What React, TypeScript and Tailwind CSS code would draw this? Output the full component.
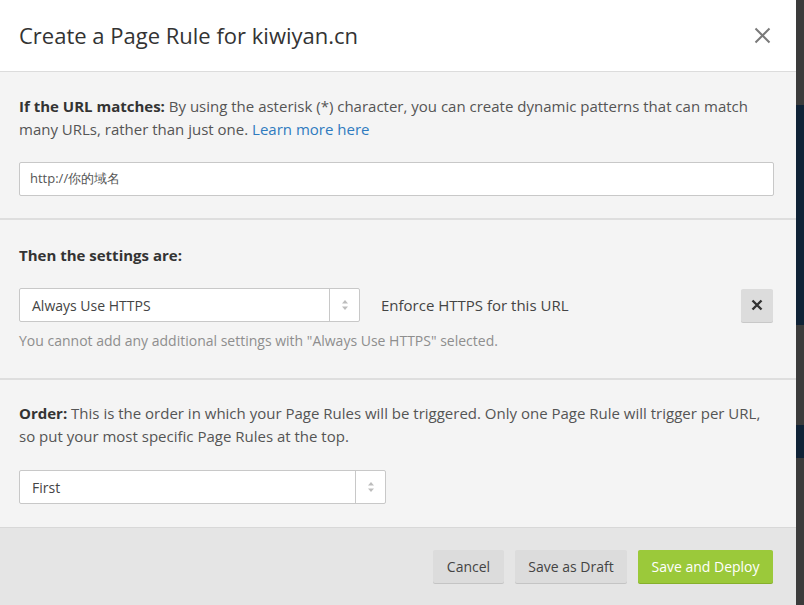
export default function App() {
  return (
    <div className="flex h-[605px] w-[804px] overflow-hidden bg-[#3b3b3b] font-['Open_Sans',sans-serif]">
      {/* Modal */}
      <div className="flex w-[796px] flex-col bg-white">
        {/* Header */}
        <div className="flex h-[72px] shrink-0 items-center justify-between border-b border-[#dcdcdc] pl-[19px] pr-[25px]">
          <h1 className="text-[22px] text-[#333]">Create a Page Rule for kiwiyan.cn</h1>
          <CloseIcon />
        </div>

        {/* URL section */}
        <div className="shrink-0 border-b-2 border-[#dedede] bg-[#f4f4f4] pl-[19px] pr-[23px] pb-[22px] pt-[23px]">
          <p className="text-[15px] leading-[23px] text-[#555]">
            <span className="font-bold text-[#333]">If the URL matches:</span> By using the asterisk (*)
            character, you can create dynamic patterns that can match many URLs, rather than just one.{" "}
            <span className="text-[#2f7bbf]">Learn more here</span>
          </p>
          <div className="mt-[21px] flex h-[34px] w-[755px] items-center rounded-[2px] border border-[#c8c8c8] bg-white px-[10px] text-[13px] text-[#555]">
            http://你的域名
          </div>
        </div>

        {/* Settings section */}
        <div className="shrink-0 border-b-2 border-[#dedede] bg-[#f4f4f4] pl-[19px] pr-[23px] pb-[27px] pt-[24px]">
          <div className="text-[15px] font-bold leading-[23px] text-[#333]">Then the settings are:</div>
          <div className="mt-[21px] flex items-center">
            <Select label="Always Use HTTPS" width="w-[341px]" />
            <div className="ml-[21px] flex-1 text-[15px] text-[#444]">Enforce HTTPS for this URL</div>
            <button className="flex h-[33px] w-[32px] items-center justify-center rounded-[2px] bg-[#dcdcdc] shadow-[0_1px_0_#c8c8c8]">
              <svg width="12" height="12" viewBox="0 0 12 12">
                <path d="M1.5 1.5 L10.5 10.5 M10.5 1.5 L1.5 10.5" stroke="#333" strokeWidth="2.4" />
              </svg>
            </button>
          </div>
          <div className="mt-[9px] text-[14px] leading-[20px] text-[#8e8e8e]">
            You cannot add any additional settings with "Always Use HTTPS" selected.
          </div>
        </div>

        {/* Order section */}
        <div className="shrink-0 bg-[#f4f4f4] pl-[19px] pr-[23px] pb-[23px] pt-[22px]">
          <p className="text-[15px] leading-[23px] text-[#555]">
            <span className="font-bold text-[#333]">Order:</span> This is the order in which your Page Rules
            will be triggered. Only one Page Rule will trigger per URL, so put your most specific Page Rules at
            the top.
          </p>
          <div className="mt-[22px]">
            <Select label="First" width="w-[367px]" />
          </div>
        </div>

        {/* Footer */}
        <div className="flex flex-1 items-start justify-end gap-[11px] border-t border-[#d8d8d8] bg-[#e5e5e5] pr-[23px] pt-[22px]">
          <button className="h-[33px] w-[71px] rounded-[2px] bg-[#dcdcdc] text-[14px] text-[#444] shadow-[0_1px_0_#c4c4c4]">
            Cancel
          </button>
          <button className="h-[33px] w-[112px] rounded-[2px] bg-[#dcdcdc] text-[14px] text-[#444] shadow-[0_1px_0_#c4c4c4]">
            Save as Draft
          </button>
          <button className="h-[33px] w-[135px] rounded-[2px] bg-[#9bc93a] text-[14px] text-white shadow-[0_1px_0_#86b02c]">
            Save and Deploy
          </button>
        </div>
      </div>

      {/* Background page peeking out on the right */}
      <div className="flex flex-1 flex-col">
        <div className="h-[105px] bg-[#3b3b3b]" />
        <div className="h-[220px] bg-[#0f2236]" />
        <div className="h-[100px] bg-[#3b3b3b]" />
        <div className="h-[33px] bg-[#0f2236]" />
        <div className="flex-1 bg-[#3b3b3b]" />
      </div>
    </div>
  );
}

function Select({ label, width }: { label: string; width: string }) {
  return (
    <div className={`flex h-[34px] ${width} rounded-[2px] border border-[#c8c8c8] bg-white`}>
      <div className="flex flex-1 items-center px-[12px] text-[14px] text-[#444]">{label}</div>
      <div className="flex w-[30px] items-center justify-center border-l border-[#c8c8c8]">
        <svg width="8" height="12" viewBox="0 0 8 12">
          <path d="M4 1 L7 4.5 H1 Z" fill="#bdbdbd" />
          <path d="M4 11 L7 7.5 H1 Z" fill="#bdbdbd" />
        </svg>
      </div>
    </div>
  );
}

function CloseIcon() {
  return (
    <svg width="17" height="17" viewBox="0 0 17 17">
      <path d="M1.5 1.5 L15.5 15.5 M15.5 1.5 L1.5 15.5" stroke="#7a7a7a" strokeWidth="2" />
    </svg>
  );
}
